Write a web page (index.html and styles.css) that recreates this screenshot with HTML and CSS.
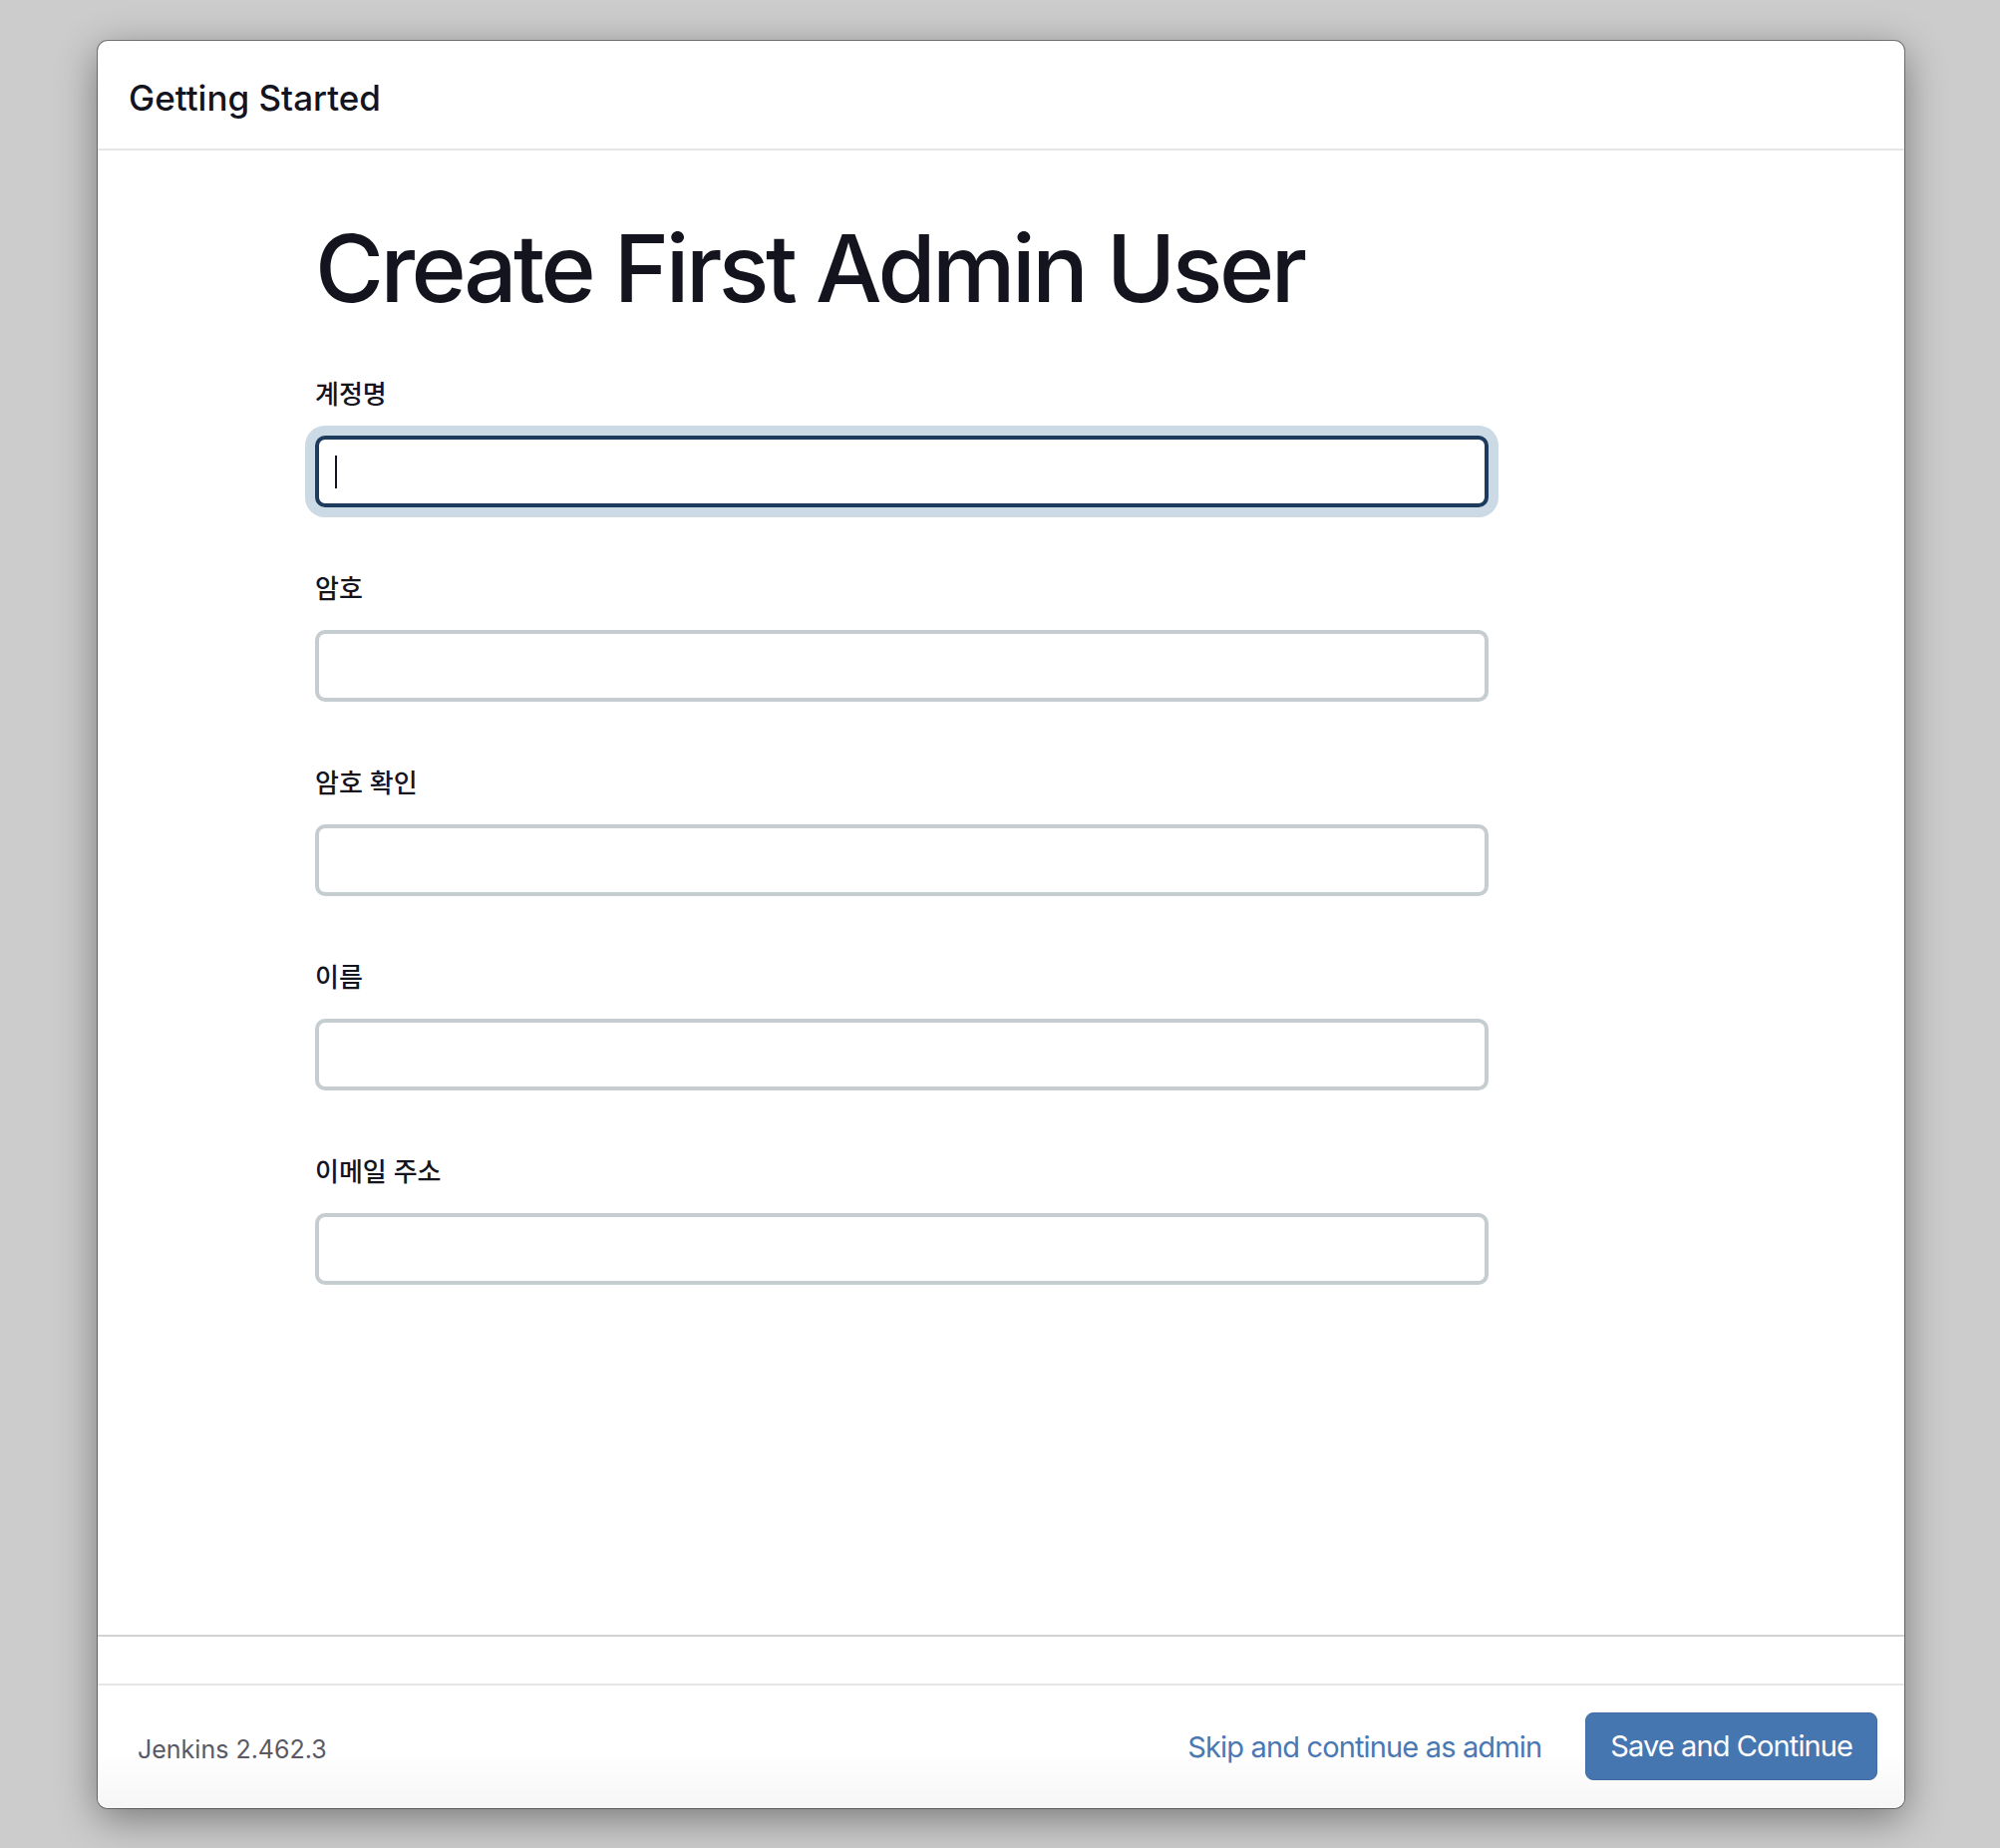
FILE: index.html
```html
<!DOCTYPE html>
<html lang="ko">
<head>
<meta charset="utf-8">
<title>Getting Started</title>
<link rel="stylesheet" href="styles.css">
</head>
<body>
<div class="page">
  <div class="dialog">
    <div class="header">
      <h4 class="header-title">Getting Started</h4>
    </div>
    <div class="content">
      <h1 class="title">Create First Admin User</h1>
      <form class="form">
        <div class="field">
          <label class="label">계정명</label>
          <div class="input-wrap">
            <input class="input input-focus" type="text">
            <span class="caret"></span>
          </div>
        </div>
        <div class="field">
          <label class="label">암호</label>
          <input class="input" type="password">
        </div>
        <div class="field">
          <label class="label">암호 확인</label>
          <input class="input" type="password">
        </div>
        <div class="field">
          <label class="label">이름</label>
          <input class="input" type="text">
        </div>
        <div class="field">
          <label class="label">이메일 주소</label>
          <input class="input" type="text">
        </div>
      </form>
    </div>
    <div class="spacer"></div>
    <div class="footer">
      <span class="version">Jenkins 2.462.3</span>
      <div class="actions">
        <a class="skip" href="#">Skip and continue as admin</a>
        <button class="save" type="button">Save and Continue</button>
      </div>
    </div>
  </div>
</div>
</body>
</html>
```

FILE: styles.css
```css
html, body {
  margin: 0;
  padding: 0;
  background: #cccccc;
  font-family: Inter, "Noto Sans CJK KR", sans-serif;
  color: #14141f;
}

.page {
  padding: 41px 0 0 98px;
  height: 1854px;
  box-sizing: border-box;
}

.dialog {
  width: 1812px;
  height: 1773px;
  background: #ffffff;
  border-radius: 10px;
  display: flex;
  flex-direction: column;
  overflow: hidden;
  box-shadow: 0 0 0 1px rgba(0, 0, 0, 0.38), 0 10px 40px rgba(0, 0, 0, 0.42);
}

.header {
  height: 110px;
  box-sizing: border-box;
  flex: none;
  border-bottom: 2px solid #e6e6e6;
  display: flex;
  align-items: center;
  padding: 5px 0 0 31px;
}

.header-title {
  margin: 0;
  font-size: 35px;
  line-height: 40px;
  font-weight: 500;
  color: #14141f;
}

.content {
  flex: 1;
  padding: 71px 0 0 218px;
  border-bottom: 2px solid #d3d3d3;
}

.title {
  margin: 0;
  font-size: 94px;
  line-height: 94px;
  font-weight: 500;
  color: #14141f;
  letter-spacing: -3.5px;
}

.form {
  margin-top: 65px;
  display: flex;
  flex-direction: column;
  gap: 67px;
}

.field {
  display: flex;
  flex-direction: column;
}

.label {
  display: block;
  font-size: 26px;
  line-height: 30px;
  font-weight: 500;
  color: #14141f;
  margin-bottom: 26px;
}

.input-wrap {
  position: relative;
  width: 1177px;
}

.input {
  display: block;
  width: 1177px;
  height: 72px;
  box-sizing: border-box;
  border: 4px solid #c5cdd1;
  border-radius: 10px;
  background: #ffffff;
  margin: 0;
  padding: 0 16px;
  font-family: inherit;
  font-size: 24px;
  outline: none;
}

.input-focus {
  border-color: #1d3b5d;
  box-shadow: 0 0 0 10px #ccdae6;
}

.caret {
  position: absolute;
  left: 20px;
  top: 20px;
  width: 2px;
  height: 33px;
  background: #14141f;
}

.spacer {
  height: 47px;
  flex: none;
  border-bottom: 2px solid #e6e6e6;
}

.footer {
  height: 123px;
  flex: none;
  display: flex;
  align-items: center;
  padding: 0 27px 0 40px;
  background: linear-gradient(to bottom, #ffffff 55%, #f6f6f6 100%);
}

.version {
  font-size: 25px;
  color: #5a5a66;
  padding-top: 4px;
}

.actions {
  margin-left: auto;
  display: flex;
  align-items: center;
  gap: 44px;
}

.skip {
  font-size: 29px;
  color: #4a78b2;
  text-decoration: none;
  letter-spacing: -0.85px;
}

.save {
  height: 68px;
  padding: 0 24px;
  background: #4676b0;
  border: 1px solid #3f6ca4;
  border-radius: 8px;
  color: #ffffff;
  font-family: inherit;
  font-size: 29px;
  font-weight: 400;
  letter-spacing: -0.9px;
  margin-top: -2px;
}
```
